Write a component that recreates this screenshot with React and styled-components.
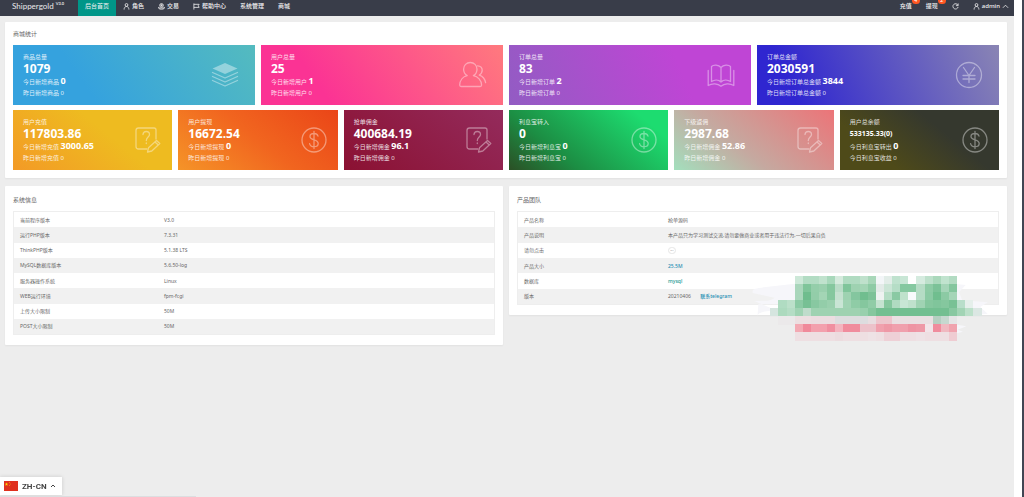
import React from "react";
import styled, { createGlobalStyle } from "styled-components";

const GlobalStyle = createGlobalStyle`
  * { box-sizing: border-box; }
  body {
    margin: 0;
    background: #ededed;
    color: #666;
    font-family: "Noto Sans", "Noto Sans CJK SC", sans-serif;
    font-size: 5px;
  }
  a { text-decoration: none; }
`;

const Screen = styled.div`
  display: flex;
  min-height: 100vh;
`;
const Page = styled.div`
  flex: 1;
  min-width: 0;
  background: #ededed;
`;
const Gutter = styled.div`
  width: 8px;
  background: #fff;
`;
const Edge = styled.div`
  width: 2px;
  background: #414553;
`;

const Header = styled.header`
  display: flex;
  height: 16px;
  background: #393d49;
  overflow: hidden;
`;
const Logo = styled.a`
  width: 78px;
  padding-left: 12px;
  color: #e8e8ea;
  font-family: Lato, sans-serif;
  font-size: 8px;
  line-height: 12px;
  white-space: nowrap;
`;
const Version = styled.sup`
  margin-left: 2px;
  font-size: 4px;
  font-weight: 700;
  line-height: 1px;
`;
const Nav = styled.nav`
  display: flex;
`;
const UserNav = styled(Nav)`
  margin-left: auto;
  padding-right: 0;
`;
const NavLink = styled.a`
  position: relative;
  display: flex;
  align-items: center;
  gap: 2px;
  padding: 0 7px 4px;
  color: #f2f2f3;
  background: ${(p) => (p.$active ? "#009688" : "transparent")};
  font-size: 6px;
  font-weight: ${(p) => (p.$active ? 400 : 500)};
  line-height: 12px;
  white-space: nowrap;
  ${UserNav} &:last-child { padding-right: 5px; }
`;
const Badge = styled.span`
  position: absolute;
  top: -3px;
  right: -1px;
  width: 8px;
  height: 7px;
  border-radius: 4px;
  background: #ff5722;
  color: #fff;
  font-size: 5px;
  line-height: 7px;
  text-align: center;
`;
const NavSvg = styled.svg`
  width: 7px;
  height: 7px;
  fill: none;
  stroke: currentColor;
  stroke-width: 1.8;
`;

const Content = styled.main`
  display: grid;
  grid-template-columns: 1fr 1fr;
  align-items: start;
  column-gap: 6px;
  row-gap: 8px;
  padding: 6px 7px 0 5px;
`;
const Panel = styled.section`
  position: relative;
  grid-column: ${(p) => (p.$wide ? "1 / -1" : "auto")};
  min-width: 0;
  padding: ${(p) => (p.$wide ? "0 8px 8px" : "0 8px 10px")};
  background: #fff;
  border-radius: 1px;
  box-shadow: 0 1px 2px rgba(0, 0, 0, 0.05);
`;
const PanelTitle = styled.h2`
  margin: 0;
  padding-top: ${(p) => (p.$wide ? "6px" : "8px")};
  height: ${(p) => (p.$wide ? "23px" : "25px")};
  color: #666;
  font-size: 6px;
  font-weight: 400;
  line-height: 12px;
`;

const CardGrid = styled.div`
  display: grid;
  grid-template-columns: repeat(${(p) => p.$columns}, 1fr);
  gap: 6px;
  & + & { margin-top: 5px; }
`;
const Card = styled.article`
  display: flex;
  align-items: center;
  justify-content: space-between;
  height: 60px;
  padding: 0 ${(p) => (p.$inset)}px 0 10px;
  background: ${(p) => p.$fill};
  color: rgba(255, 255, 255, 0.85);
`;
const CardText = styled.div`
  display: grid;
  grid-template-rows: 11px 14px 11px 12px;
  align-items: center;
  font-size: 6px;
  line-height: 10px;
  white-space: nowrap;
`;
const Total = styled.strong`
  color: #fff;
  font-size: ${(p) => (p.$small ? "7px" : "12px")};
  font-weight: 700;
`;
const Today = styled.b`
  color: #fff;
  font-size: 9px;
  font-weight: 700;
`;
const CardSvg = styled.svg`
  flex: none;
  width: 28px;
  height: 28px;
  fill: none;
  stroke: #fff;
  stroke-width: 1.3;
  stroke-linecap: round;
  stroke-linejoin: round;
  opacity: 0.4;
`;

const Table = styled.table`
  width: 100%;
  height: ${(p) => p.$height}px;
  border: 1px solid #eee;
  border-spacing: 0;
  table-layout: fixed;
  color: #666;
`;
const Row = styled.tr`
  background: #fff;
  &:nth-child(even) { background: #f1f1f1; }
`;
const Name = styled.th`
  width: 30%;
  padding: 0 6px;
  font-size: 5px;
  font-weight: 400;
  line-height: 8px;
  text-align: left;
`;
const Value = styled.td`
  padding: 0 6px;
  font-size: 5px;
  line-height: 8px;
  white-space: nowrap;
`;
const ValueLink = styled.a`
  color: ${(p) => (p.$green ? "#16968f" : "#1e8fb4")};
  margin-left: ${(p) => (p.$spaced ? "8px" : "0")};
  font-weight: 500;
`;
const RoundButton = styled.button`
  display: block;
  width: 8px;
  height: 7px;
  padding: 0;
  border: 1px solid #e6e6e6;
  border-radius: 4px;
  background: #fff;
  color: #aaa;
  font: inherit;
  font-size: 2px;
  line-height: 5px;
`;
const Mosaic = styled.svg`
  position: absolute;
  top: 89px;
  right: 12px;
  width: 244px;
  height: 66px;
`;

const Language = styled.button`
  position: fixed;
  left: 0;
  bottom: 2px;
  display: flex;
  align-items: center;
  gap: 4px;
  height: 18px;
  padding: 0 6px 0 4px;
  border: 0;
  background: #fff;
  box-shadow: 0 0 4px rgba(0, 0, 0, 0.15);
  color: #444;
  font-family: Roboto, sans-serif;
  font-size: 8px;
  font-weight: 700;
`;
const Flag = styled.svg`
  width: 14px;
  height: 10px;
`;
const Caret = styled.svg`
  width: 6px;
  height: 6px;
  margin-left: -1px;
  fill: none;
  stroke: currentColor;
  stroke-width: 1;
`;
const StatusLine = styled.div`
  position: fixed;
  left: 0;
  bottom: 0;
  width: 196px;
  height: 1px;
  background: #dcdee0;
`;

const navShapes = {
  user: <><circle cx="8" cy="4.5" r="3.2" /><path d="M2.5 15c0-4 2-7 5.500-7s5.500 3 5.500 7" /></>,
  trade: <><circle cx="8" cy="5.500" r="4.200" /><path d="M5 5h6M8 3v5M1.500 9v3c2 3 11 3 13 0V9M2 11.500h12" /></>,
  flag: <path d="M2 1v14M2 3h12l-2 3 2 4H2" />,
  refresh: <path d="M13.500 5A6 6 0 1 0 14 9M14 1v5H9" />,
};
function NavIcon({ name }) {
  return <NavSvg viewBox="0 0 16 16" aria-hidden="true">{navShapes[name]}</NavSvg>;
}

const cardShapes = {
  layers: (
    <>
      <path d="M14 2 1.500 7.500 14 13l12.500-5.500z" fill="#fff" stroke="none" />
      <path d="M1.500 11.500 14 17l12.500-5.500M1.500 15.500 14 21l12.500-5.500M1.500 19.500 14 25l12.500-5.500" />
    </>
  ),
  users: (
    <path d="M8.200 14.600C5.800 13.200 4.600 10.800 4.600 8.200c0-3.900 2.900-6.700 6.700-6.700s6.700 2.800 6.700 6.700c0 2.600-1.200 5-3.600 6.400 4.500.9 8 4.700 8.200 9.400 0 1-.5 1.500-1.400 1.500H2.100c-.9 0-1.400-.5-1.400-1.500.2-4.700 3.300-8.500 7.500-9.400M18.600 4.800c3 .2 4.600 2 4.600 4.500 0 2-1.100 3.700-2.900 4.800 3.400 1.200 5.700 3.800 6.300 7.600" />
  ),
  book: (
    <path d="M14 6.500C11.500 3.500 6.500 3.500 4.500 5.500v15c3-2 7-2 9.500.5 2.500-2.500 6.500-2.500 9.500-.5v-15c-2-2-7-2-9.500 1V21M1.200 9.500v15c4-2.500 9.500-2 12.800.7 3.300-2.700 8.800-3.200 12.800-.7v-15" />
  ),
  yen: (
    <>
      <circle cx="14" cy="14" r="12.500" />
      <path d="m8.500 6.500 5.500 8 5.500-8M14 14.500V21.500M8 14.500h12M8 18h12" />
    </>
  ),
  dollar: (
    <>
      <circle cx="14" cy="14" r="12" />
      <path d="M18 10.200c-.5-1.800-2-2.700-4-2.700-2.300 0-4 1.200-4 3 0 4.300 8.200 2.300 8.200 7 0 2-1.800 3.200-4.200 3.200s-4-1.200-4.400-3.100M14 5.500v17" />
    </>
  ),
  note: (
    <>
      <path d="M13 23H4.500A2.500 2.500 0 0 1 2 20.500V4.500A2.500 2.500 0 0 1 4.500 2h15.500A2 2 0 0 1 22 4v9" />
      <path d="M9 8.500c.2-2 1.500-3 3.200-3 2 0 3.300 1.300 3.300 3 0 2.500-3.200 2.500-3.200 6M12.300 17v.6" />
      <path d="m14.500 21.800 8-7.300 3.300 3-8 7.500-4.300 1zM21 16l3.300 3" />
    </>
  ),
};

const primary = [
  ["商品总量", "1079", "今日新增商品", "0", "昨日新增商品 0", "layers", "linear-gradient(-125deg, #54bbbf, #35a2de 70%)"],
  ["用户总量", "25", "今日新增用户", "1", "昨日新增用户 0", "users", "linear-gradient(-125deg, #ff7a7e, #fb3394 75%)"],
  ["订单总量", "83", "今日新增订单", "2", "昨日新增订单 0", "book", "linear-gradient(-113deg, #bf45d5 30%, #925cc3)"],
  ["订单总金额", "2030591", "今日新增订单总金额", "3844", "昨日新增订单总金额 0", "yen", "linear-gradient(-113deg, #8a85b4, #2f26d0 85%)"],
];
const secondary = [
  ["用户充值", "117803.86", "今日新增充值", "3000.65", "昨日新增充值 0", "note", "linear-gradient(-141deg, #eebb20 40%, #f39a26)"],
  ["用户提现", "16672.54", "今日新增提现", "0", "昨日新增提现 0", "dollar", "linear-gradient(-141deg, #ea4518, #f1651f 50%, #f59428)"],
  ["抢单佣金", "400684.19", "今日新增佣金", "96.1", "昨日新增佣金 0", "note", "linear-gradient(-141deg, #942b5c, #8b1132)"],
  ["利息宝转入", "0", "今日新增利息宝", "0", "昨日新增利息宝 0", "dollar", "linear-gradient(-141deg, #1ddc70 15%, #1c8d43 70%, #2b4f25)"],
  ["下级返佣", "2987.68", "今日新增佣金", "52.86", "昨日新增佣金 0", "note", "linear-gradient(-141deg, #ec7478, #c5a9a0 60%, #a3dfbd)"],
  ["用户总余额", "533135.33(0)", "今日利息宝转出", "0", "今日利息宝收益 0", "dollar", "linear-gradient(-141deg, #35382e 35%, #4e4a19 75%)"],
];

function StatCard({ data, inset }) {
  const [title, total, label, today, yesterday, icon, fill] = data;
  return (
    <Card $fill={fill} $inset={inset}>
      <CardText>
        <span>{title}</span>
        <Total $small={total.length > 10}>{total}</Total>
        <span>{label} <Today>{today}</Today></span>
        <span>{yesterday}</span>
      </CardText>
      <CardSvg viewBox="0 0 28 28" aria-hidden="true">{cardShapes[icon]}</CardSvg>
    </Card>
  );
}

const systemRows = [
  ["当前程序版本", "V3.0"],
  ["运行PHP版本", "7.3.31"],
  ["ThinkPHP版本", "5.1.38 LTS"],
  ["MySQL数据库版本", "5.6.50-log"],
  ["服务器操作系统", "Linux"],
  ["WEB运行环境", "fpm-fcgi"],
  ["上传大小限制", "50M"],
  ["POST大小限制", "50M"],
];
const productRows = [
  ["产品名称", "抢单源码"],
  ["产品说明", "本产品只为学习测试交流,请勿要做商业或者用于违法行为,一切后果自负"],
  ["请勿点击", <RoundButton type="button">GPL</RoundButton>],
  ["产品大小", <ValueLink href="#size">25.5M</ValueLink>],
  ["数据库", <ValueLink href="#db" $green>mysql</ValueLink>],
  ["版本", <>20210406 <ValueLink href="#telegram" $spaced>联系telegram</ValueLink></>],
];

function InfoTable({ rows, height }) {
  return (
    <Table $height={height}>
      <tbody>
        {rows.map(([name, value]) => (
          <Row key={name}>
            <Name scope="row">{name}</Name>
            <Value>{value}</Value>
          </Row>
        ))}
      </tbody>
    </Table>
  );
}

// Each line: first column, then one colour per cell.
const mosaicRows = [
  [0, "cde8d8 b2dcc3 b2dcc3 c0e2cd a8d8bb d5eadd b0dbc1 b0dbc1 bfe1cc a8d7b9 f3f6f8 e2ede8 bfe2ce c8e6d5 ffffff d5ebdf bde0cb aad8bb c0e3ce b2dbc2"],
  [0, "a9d6bb 7fc59a 94ceaa 9ad0ae 85c79e b9dcc7 80c59b 9ed2b1 a3d5b5 8ecba5 e3ebe8 cbe5d6 b5ddc6 85c8a0 85c8a0 b5dcc5 8dcba5 7cc298 a5d5b8 84c69e"],
  [0, "a9d6bb 6fbd8e 93cda9 a3d5b5 85c79e c5e1d0 9ed2b1 84c69f 70be8f 7dc298 eef3f1 b5ddc5 8ac9a3 bfe2cc f8fafc b5dcc5 8bcaa4 70be8f 8ccaa4 a5d5b8"],
  [-2, "b0dcc2 bce0ca 8bcaa4 77c094 88c8a1 93cda9 9ad0ae c9e5d5 a0d3b3 8fcca6 85c79e 90cca7 c5e3d1 85c79e b0dbc1 c8e6d5 bfe1cc a0d3b3 85c79e 80c59b 85c79e 78c195 b8deca e5efeb"],
  [-3, "d5e5df acdabe b5ddc5 a0d3b3 bfdccb 9ed2b1 9ed2b1 9ed2b1 9ed2b1 9ed2b1 9ed2b1 98d0ad 85c79e 73bf91 73bf91 73bf91 73bf91 73bf91 73bf91 73bf91 73bf91 73bf91 88c8a1 a2d4b5 bce0ca dbe7e3"],
  [-2, "ebe9ea ebe9ea ecdfe1 ecdfe1 ebdde0 ebdde0 ebdde0 dddddf dddddf dddddf dddddf e8dde0 ecc6cd ecc6cd e9e0e2 e9e0e2 e9e0e2 e9e0e2 e9e0e2 b5cfc1 c6d8cf e5e5e6"],
  [0, "f3a9b3 f0899a f3a0ad f3a0ad f08fa0 f4b4bf f08c9d f08c9d ecc2ca ecc2ca f0a0ad ee98a6 f0a0ad f0a0ad ee94a3 ee98a6 f2e4e8 f08c9d f0b8c0 f0a3ae"],
  [0, "eedfe2 eedfe2 eedfe2 eedfe2 eedfe2 ecdcdf eedfe2 eedfe2 eedfe2 eee2e5 eedfe2 eed0d6 eed0d6 eedfe2 eedfe2 eee2e5 eedfe2 eedfe2 eedfe2 efccd2"],
];

function Smudge() {
  return (
    <Mosaic viewBox="0 0 732 198" aria-hidden="true">
      <path d="M5 50c-2-8 10-10 40-14l87-10v60l-110 2-2 30L20 122c0-10 25-14 55-16L10 78c40 0 55-2 60-10L5 54zM610 26l34 4-20 22 10 24 76 6-22 14 22 20-86 8zM610 148l36 6-26 10 16 6-30 8z" fill="#f6f6fa" />
      <g shapeRendering="crispEdges">
        {mosaicRows.map(([start, cells], row) =>
          cells.split(" ").map((color, i) => (
            <rect
              key={`${row}-${i}`}
              x={131 + Math.round((start + i) * 24.35)}
              y={2 + Math.round(row * 24.3)}
              width="25"
              height="25"
              fill={`#${color}`}
            />
          ))
        )}
      </g>
    </Mosaic>
  );
}

export default function App() {
  return (
    <>
      <GlobalStyle />
      <Screen>
        <Page>
          <Header>
            <Logo href="#home">Shippergold<Version>V3.0</Version></Logo>
            <Nav>
              <NavLink href="#dashboard" $active>后台首页</NavLink>
              <NavLink href="#roles"><NavIcon name="user" />角色</NavLink>
              <NavLink href="#trade"><NavIcon name="trade" />交易</NavLink>
              <NavLink href="#help"><NavIcon name="flag" />帮助中心</NavLink>
              <NavLink href="#system">系统管理</NavLink>
              <NavLink href="#mall">商城</NavLink>
            </Nav>
            <UserNav>
              <NavLink href="#recharge">充值<Badge>4</Badge></NavLink>
              <NavLink href="#withdraw">提现<Badge>2</Badge></NavLink>
              <NavLink href="#refresh" aria-label="刷新"><NavIcon name="refresh" /></NavLink>
              <NavLink href="#account">
                <NavIcon name="user" />admin
                <NavSvg viewBox="0 0 16 16" aria-hidden="true"><path d="m2 11 6-6 6 6" /></NavSvg>
              </NavLink>
            </UserNav>
          </Header>
          <Content>
            <Panel $wide>
              <PanelTitle $wide>商城统计</PanelTitle>
              <CardGrid $columns={4}>
                {primary.map((data) => <StatCard key={data[0]} data={data} inset={16} />)}
              </CardGrid>
              <CardGrid $columns={6}>
                {secondary.map((data) => <StatCard key={data[0]} data={data} inset={10} />)}
              </CardGrid>
            </Panel>
            <Panel>
              <PanelTitle>系统信息</PanelTitle>
              <InfoTable rows={systemRows} height={124} />
            </Panel>
            <Panel>
              <PanelTitle>产品团队</PanelTitle>
              <InfoTable rows={productRows} height={94} />
              <Smudge />
            </Panel>
          </Content>
        </Page>
        <Gutter />
        <Edge />
      </Screen>
      <Language type="button">
        <Flag viewBox="0 0 14 10" aria-hidden="true">
          <rect width="14" height="10" fill="#e0301e" />
          <path d="m2.500 1.500.5 1.200h1.200l-1 .8.4 1.200-1.100-.7-1.100.7.4-1.200-1-.8H2z" fill="#fd0" />
          <circle cx="5.500" cy="1.500" r=".4" fill="#fd0" />
          <circle cx="6.200" cy="3" r=".4" fill="#fd0" />
          <circle cx="5.500" cy="4.500" r=".4" fill="#fd0" />
        </Flag>
        ZH-CN
        <Caret viewBox="0 0 6 6" aria-hidden="true"><path d="m1 4 2-2 2 2" /></Caret>
      </Language>
      <StatusLine />
    </>
  );
}
